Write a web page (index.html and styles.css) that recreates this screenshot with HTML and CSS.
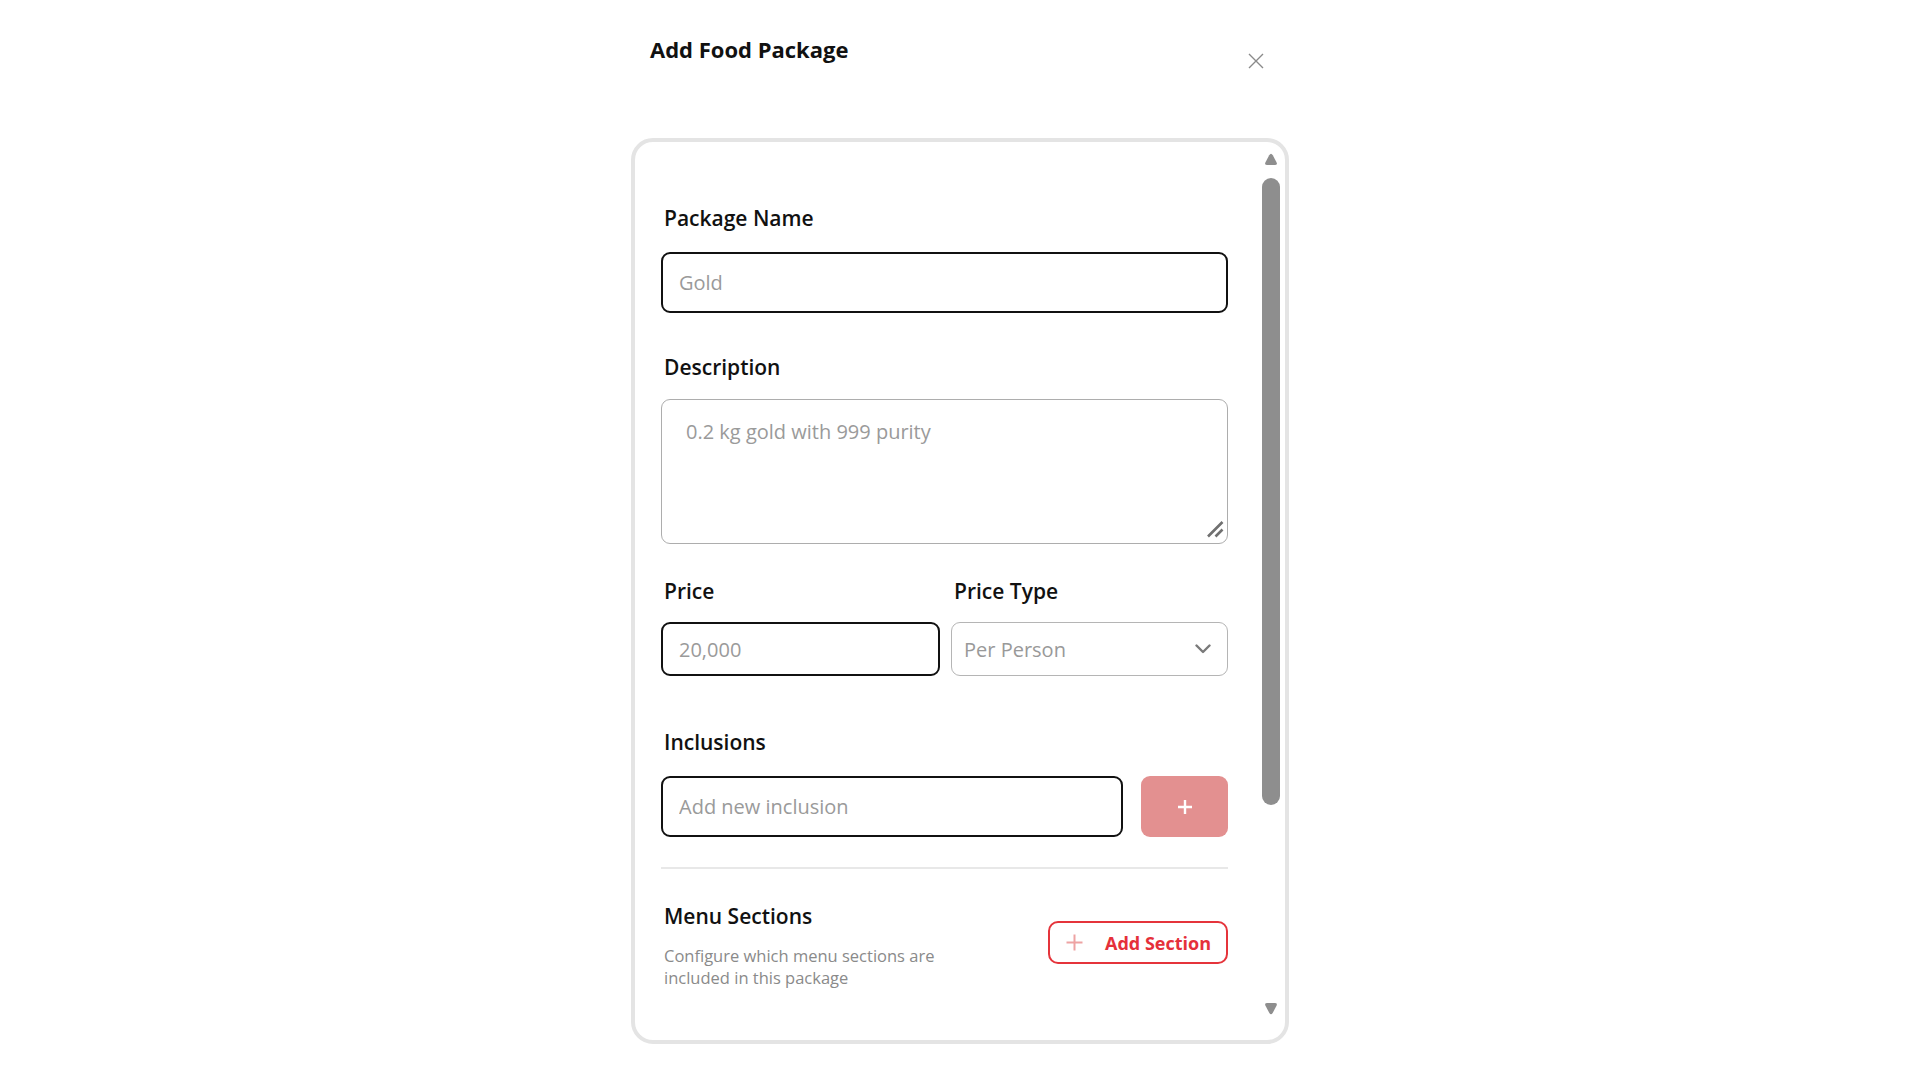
FILE: index.html
```html
<!DOCTYPE html>
<html lang="en">
<head>
  <meta charset="UTF-8">
  <meta name="viewport" content="width=device-width, initial-scale=1.0">
  <title>Add Food Package</title>
  <link rel="stylesheet" href="styles.css">
</head>
<body>
  <div class="modal">
    <div class="modal-header">
      <h2 class="modal-title">Add Food Package</h2>
      <button class="close-btn" aria-label="Close">
        <svg width="16" height="16" viewBox="0 0 16 16"><path d="M1 1 L15 15 M15 1 L1 15" stroke="#8a8a8a" stroke-width="1.4" fill="none"/></svg>
      </button>
    </div>

    <div class="card">
      <form class="form">
        <div class="field field-name">
          <label class="label">Package Name</label>
          <input class="input input-dark" type="text" placeholder="Gold">
        </div>

        <div class="field field-desc">
          <label class="label">Description</label>
          <div class="textarea-wrap">
            <textarea class="textarea" placeholder="0.2 kg gold with 999 purity"></textarea>
            <svg class="resizer" width="18" height="18" viewBox="0 0 18 18"><path d="M2 16.5 L16.5 2 M9.5 16.5 L16.5 9.5" stroke="#707070" stroke-width="2.6" fill="none"/></svg>
          </div>
        </div>

        <div class="price-row">
          <div class="field">
            <label class="label">Price</label>
            <input class="input input-dark input-short" type="text" placeholder="20,000">
          </div>
          <div class="field">
            <label class="label">Price Type</label>
            <div class="select-wrap">
              <select class="select">
                <option>Per Person</option>
                <option>Per Event</option>
              </select>
              <svg class="chevron" width="16" height="10" viewBox="0 0 16 10"><path d="M1.5 1.5 L8 8 L14.5 1.5" stroke="#7a7a7a" stroke-width="2.4" fill="none" stroke-linecap="round" stroke-linejoin="round"/></svg>
            </div>
          </div>
        </div>

        <div class="field field-incl">
          <label class="label">Inclusions</label>
          <div class="incl-row">
            <input class="input input-dark" type="text" placeholder="Add new inclusion">
            <button type="button" class="add-btn" aria-label="Add inclusion">
              <svg width="16" height="16" viewBox="0 0 16 16"><path d="M8 1 V15 M1 8 H15" stroke="#fff" stroke-width="2.4" fill="none"/></svg>
            </button>
          </div>
        </div>

        <hr class="divider">

        <div class="sections-row">
          <div>
            <div class="label">Menu Sections</div>
            <p class="sections-desc">Configure which menu sections are included in this package</p>
          </div>
          <button type="button" class="section-btn">
            <svg width="17" height="17" viewBox="0 0 17 17"><path d="M8.5 0.5 V16.5 M0.5 8.5 H16.5" stroke="#eea3a3" stroke-width="2" fill="none"/></svg>
            <span>Add Section</span>
          </button>
        </div>
      </form>

      <div class="scrollbar">
        <svg class="arrow" width="14" height="13" viewBox="0 0 14 13"><path d="M5.2 2.2 Q7 -0.8 8.8 2.2 L12.5 9.2 Q13.8 12 10.8 12 L3.2 12 Q0.2 12 1.5 9.2 Z" fill="#8e8e8e"/></svg>
        <div class="thumb"></div>
        <svg class="arrow arrow-down" width="14" height="13" viewBox="0 0 14 13"><path d="M5.2 10.8 Q7 13.8 8.8 10.8 L12.5 3.8 Q13.8 1 10.8 1 L3.2 1 Q0.2 1 1.5 3.8 Z" fill="#8e8e8e"/></svg>
      </div>
    </div>
  </div>
</body>
</html>
```

FILE: styles.css
```css
body {
  margin: 0;
  background: #fff;
  font-family: "Open Sans", Arial, sans-serif;
  color: #111;
}

.modal {
  width: 658px;
  margin: 0 auto;
  padding-top: 34px;
}

.modal-header {
  display: flex;
  justify-content: space-between;
  align-items: flex-start;
  padding: 0 21px 0 19px;
  margin-bottom: 65px;
}

.modal-title {
  margin: 0;
  font-size: 22px;
  font-weight: 700;
  line-height: 30px;
}

.close-btn {
  background: none;
  border: none;
  padding: 0;
  width: 24px;
  height: 24px;
  margin-top: 15px;
  display: flex;
  align-items: center;
  justify-content: center;
  cursor: pointer;
}

/* card with its own scrollbar column */
.card {
  box-sizing: border-box;
  height: 906px;
  border: 4px solid #e4e4e4;
  border-radius: 22px;
  display: flex;
  overflow: hidden;
}

.form {
  box-sizing: border-box;
  width: 593px;
  flex: none;
  padding: 62px 0 0 26px;
}

.field {
  display: flex;
  flex-direction: column;
}

.label {
  display: block;
  font-size: 21px;
  font-weight: 600;
  line-height: 28px;
  padding-left: 3px;
  color: #111;
}

.input,
.textarea,
.select {
  box-sizing: border-box;
  width: 100%;
  font-family: "Open Sans", Arial, sans-serif;
  font-size: 20px;
  color: #333;
  background: #fff;
  outline: none;
}

.input::placeholder,
.textarea::placeholder {
  color: #9a9a9a;
}

.input {
  height: 61px;
  padding: 0 16px;
  border-radius: 9px;
}

.input-dark {
  border: 2px solid #111;
}

.field-name .input {
  margin-top: 20px;
}

.field-desc {
  margin-top: 40px;
}

.textarea-wrap {
  position: relative;
  margin-top: 18px;
}

.textarea {
  display: block;
  height: 145px;
  border: 1px solid #adadad;
  border-radius: 9px;
  padding: 18px 24px;
  line-height: 28px;
  resize: none;
}

.resizer {
  position: absolute;
  right: 4px;
  bottom: 6px;
  pointer-events: none;
}

.price-row {
  margin-top: 33px;
  display: grid;
  grid-template-columns: 279px 277px;
  column-gap: 11px;
}

.price-row .input,
.price-row .select-wrap {
  margin-top: 17px;
}

.input-short {
  height: 54px;
}

.select-wrap {
  position: relative;
}

.select {
  appearance: none;
  height: 54px;
  border: 1px solid #b5b5b5;
  border-radius: 9px;
  padding: 0 12px;
  color: #999;
}

.chevron {
  position: absolute;
  right: 17px;
  top: 22px;
  pointer-events: none;
}

.field-incl {
  margin-top: 52px;
}

.incl-row {
  margin-top: 20px;
  display: flex;
  gap: 18px;
}

.incl-row .input {
  flex: 1;
}

.add-btn {
  width: 87px;
  height: 61px;
  flex: none;
  border: none;
  border-radius: 9px;
  background: #e39090;
  display: flex;
  align-items: center;
  justify-content: center;
  cursor: pointer;
}

.divider {
  margin: 30px 0 0;
  border: none;
  height: 2px;
  background: #e8e8e8;
}

.sections-row {
  margin-top: 33px;
  display: flex;
  justify-content: space-between;
  align-items: flex-start;
}

.sections-desc {
  margin: 15px 0 0;
  padding-left: 3px;
  width: 300px;
  font-size: 16.5px;
  line-height: 22px;
  color: #8a8a8a;
}

.section-btn {
  margin-top: 19px;
  height: 43px;
  box-sizing: border-box;
  display: flex;
  align-items: center;
  gap: 22px;
  padding: 0 15px 0 16px;
  border: 2px solid #e5343b;
  border-radius: 10px;
  background: #fff;
  color: #e5303a;
  font-family: "Open Sans", Arial, sans-serif;
  font-size: 18px;
  font-weight: 700;
  cursor: pointer;
}

/* fake classic scrollbar */
.scrollbar {
  width: 18px;
  margin-left: 34px;
  display: flex;
  flex-direction: column;
  align-items: center;
  padding: 11px 0 25px;
}

.arrow {
  flex: none;
}

.thumb {
  width: 18px;
  height: 627px;
  margin-top: 12px;
  border-radius: 9px;
  background: #8e8e8e;
}

.arrow-down {
  margin-top: auto;
}
```
